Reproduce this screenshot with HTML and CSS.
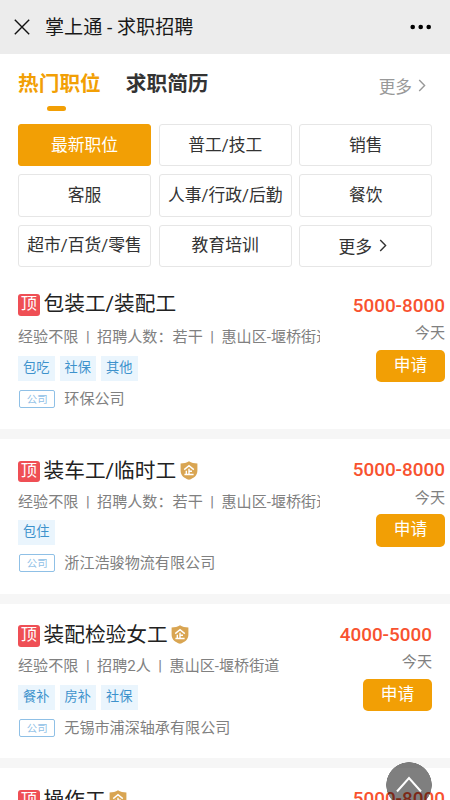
FILE: index.html
```html
<!DOCTYPE html>
<html lang="zh-CN">
<head>
<meta charset="utf-8">
<title>掌上通 - 求职招聘</title>
<link rel="stylesheet" href="styles.css">
</head>
<body>
<svg class="defs" width="0" height="0">
  <symbol id="shield" viewBox="0 0 18 19">
    <path d="M9 0.3C6.8 1.9 3.5 2.5 0.6 2.5V9.5C0.6 14.5 4 17.2 9 18.8C14 17.2 17.4 14.5 17.4 9.5V2.5C14.5 2.5 11.2 1.9 9 0.3Z" fill="#d9a552"/>
    <path d="M4.2 8.6L9 4.6L13.8 8.6M9 7.8V13.4M9 10.3H12M6.3 9.8V13.4M4.4 13.5H13.6" fill="none" stroke="#fff" stroke-width="1.4"/>
  </symbol>
  <symbol id="chevron" viewBox="0 0 8 13"><path d="M1.2 1L6.6 6.5L1.2 12" fill="none" stroke="currentColor" stroke-width="1.4"/></symbol>
</svg>
<header class="bar">
  <svg class="close" width="16" height="16" viewBox="0 0 16 16"><path d="M0.8 0.8L15.2 15.2M15.2 0.8L0.8 15.2" stroke="#111" stroke-width="1.4"/></svg>
  <h1 class="bar-title">掌上通 - 求职招聘</h1>
  <svg class="dots" width="22" height="6" viewBox="0 0 22 6"><circle cx="2.7" cy="3" r="2.3"/><circle cx="10.7" cy="3" r="2.3"/><circle cx="18.7" cy="3" r="2.3"/></svg>
</header>
<nav class="tabs">
  <span class="tab active">热门职位</span>
  <span class="tab">求职简历</span>
  <span class="more">更多<svg width="8" height="13"><use href="#chevron"/></svg></span>
</nav>
<section class="chips">
  <span class="chip on">最新职位</span><span class="chip">普工/技工</span><span class="chip">销售</span>
  <span class="chip">客服</span><span class="chip">人事/行政/后勤</span><span class="chip">餐饮</span>
  <span class="chip">超市/百货/零售</span><span class="chip">教育培训</span><span class="chip chip-more">更多<svg width="8" height="13"><use href="#chevron"/></svg></span>
</section>
<main>
  <article class="job wide">
    <div class="info">
      <h2 class="title plain"><i class="top">顶</i>包装工/装配工</h2>
      <p class="meta">经验不限<b>|</b>招聘人数：若干<b>|</b>惠山区-堰桥街道</p>
      <div class="tags"><span>包吃</span><span>社保</span><span>其他</span></div>
      <div class="company"><em>公司</em>环保公司</div>
    </div>
    <div class="side"><strong>5000-8000</strong><span class="day">今天</span><span class="apply">申请</span></div>
  </article>
  <article class="job wide">
    <div class="info">
      <h2 class="title"><i class="top">顶</i>装车工/临时工<svg class="shield"><use href="#shield"/></svg></h2>
      <p class="meta">经验不限<b>|</b>招聘人数：若干<b>|</b>惠山区-堰桥街道</p>
      <div class="tags"><span>包住</span></div>
      <div class="company"><em>公司</em>浙江浩骏物流有限公司</div>
    </div>
    <div class="side"><strong>5000-8000</strong><span class="day">今天</span><span class="apply">申请</span></div>
  </article>
  <article class="job">
    <div class="info">
      <h2 class="title"><i class="top">顶</i>装配检验女工<svg class="shield"><use href="#shield"/></svg></h2>
      <p class="meta">经验不限<b>|</b>招聘2人<b>|</b>惠山区-堰桥街道</p>
      <div class="tags"><span>餐补</span><span>房补</span><span>社保</span></div>
      <div class="company"><em>公司</em>无锡市浦深轴承有限公司</div>
    </div>
    <div class="side"><strong>4000-5000</strong><span class="day">今天</span><span class="apply">申请</span></div>
  </article>
  <article class="job wide last">
    <div class="info">
      <h2 class="title"><i class="top">顶</i>操作工<svg class="shield"><use href="#shield"/></svg></h2>
    </div>
    <div class="side"><strong>5000-8000</strong></div>
  </article>
</main>
<div class="to-top"><svg width="26" height="17" viewBox="0 0 26 17"><path d="M1 15.5L13 2L25 15.5" fill="none" stroke="#fff" stroke-width="2"/></svg></div>
</body>
</html>
```
FILE: styles.css
```css
* { box-sizing: border-box; margin: 0; padding: 0; }
html { overflow: hidden; }
body {
  width: 450px; height: 800px; overflow: hidden; position: relative;
  background: #fff; color: #333;
  font-family: Roboto, "Noto Sans CJK SC", sans-serif;
}
.defs { display: block; position: absolute; }
.bar { height: 54px; background: #ececec; display: flex; align-items: center; padding: 0 18px 0 14px; }
.bar-title { font-size: 19.1px; font-weight: 400; line-height: 28px; margin-left: 15px; padding-top: 2px; color: #181818; flex: 1; white-space: nowrap; }
.dots { fill: #000; }
.tabs { height: 70px; display: flex; padding: 15px 24px 0 18px; }
.tab { height: 44px; font-size: 20.7px; line-height: 30px; font-weight: 700; margin-right: 25px; white-space: nowrap; }
.tab.active { color: #f29f05; }
.tab.active::after { content: ""; display: block; width: 19px; height: 5px; border-radius: 3px; background: #f29f05; margin: 7px 0 0 28.5px; }
.more { margin-left: auto; display: flex; align-items: center; gap: 6px; height: 33px; font-size: 16.7px; color: #999; }
.chips { display: grid; grid-template-columns: repeat(3, 133px); gap: 8px 7.7px; grid-auto-rows: 42.3px; padding-left: 18px; height: 150.5px; }
.chip { border: 1px solid #e6e6e6; border-radius: 3px; display: flex; align-items: center; justify-content: center; font-size: 16.8px; line-height: 24px; padding-bottom: 1px; white-space: nowrap; }
.chip.on { background: #f29f05; border-color: #f29f05; color: #fff; }
.chip-more { gap: 7px; padding: 3px 6px 0 0; }
.chip-more svg { margin-top: -3px; }
.job { height: 164.5px; border-bottom: 10px solid #f6f6f6; padding: 18px 18px 0; display: flex; justify-content: space-between; }
.job.wide { padding-right: 5px; }
.job.last { height: 42px; border-bottom: 0; }
.info { width: 302px; flex: none; }
.title { height: 26px; display: flex; align-items: center; font-size: 20.7px; font-weight: 400; line-height: 26px; color: #222; white-space: nowrap; }
.title:not(.plain) { padding-top: 1px; }
.title.plain { margin-top: -1.5px; margin-bottom: 10px; }
.top { width: 21.5px; height: 21.5px; line-height: 20.5px; border-radius: 3px; background: #ef4f55; color: #fff; font-size: 16.2px; font-style: normal; text-align: center; margin: 2px 4px 0 0; }
.shield { width: 18px; height: 19px; margin-left: 3.5px; margin-top: -1px; }
.meta { height: 20px; line-height: 20px; margin-top: 8.5px; font-size: 15.1px; color: #808080; white-space: nowrap; overflow: hidden; }
.title.plain + .meta { margin-top: 0; }
.meta b { font-weight: 400; margin: 0 7.5px; }
.tags { display: flex; gap: 5px; margin-top: 8.7px; }
.tags span { width: 36.5px; height: 25px; line-height: 24px; background: #eaf5fd; color: #3d92cc; font-size: 13.2px; text-align: center; }
.company { display: flex; align-items: center; height: 20px; margin-top: 8px; font-size: 15.1px; line-height: 20px; color: #808080; white-space: nowrap; }
.company em { width: 36px; height: 18px; line-height: 17px; margin: 0 9.1px 0 1.2px; border: 1px solid #8fc0e6; border-radius: 2px; color: #8fc0e6; font-size: 10.4px; font-style: normal; text-align: center; }
.side { display: flex; flex-direction: column; align-items: flex-end; white-space: nowrap; }
.side strong { font-size: 18.9px; line-height: 26px; font-weight: 500; color: #f8522f; }
.day { font-size: 15.1px; line-height: 20px; margin-top: 4.5px; color: #808080; }
.apply { width: 69px; height: 32.5px; line-height: 31.5px; margin-top: 6.5px; border-radius: 5px; background: #f29f05; color: #fff; font-size: 16.7px; text-align: center; }
.to-top { position: absolute; left: 386px; top: 762px; width: 46px; height: 38px; display: flex; justify-content: center; padding-top: 14px; background: radial-gradient(circle 23px at 23px 23px, rgba(0, 0, 0, .5) 22.5px, transparent 23px); }
```
